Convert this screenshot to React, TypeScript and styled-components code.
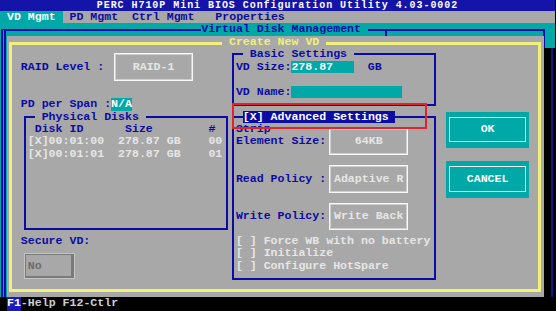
import React from 'react';
import styled, { createGlobalStyle, css } from 'styled-components';

const NAVY = '#0c0ca4';
const BLUE = '#1414a8';
const GRAY = '#a8a8a8';
const TEAL = '#00a8a8';
const YELLOW = '#f0f07a';
const WHITE = '#fcfcfc';
const LIGHT = '#e6e6e6';

// position on the 80x25 character grid (zero based, relative to the parent grid)
type Cell = { $c: number; $r: number; $w?: number; $h?: number };

const cell = css<Cell>`
  grid-column: ${(p) => p.$c + 1} / span ${(p) => p.$w ?? 1};
  grid-row: ${(p) => p.$r + 1} / span ${(p) => p.$h ?? 1};
`;

const GlobalStyle = createGlobalStyle`
  html, body { margin: 0; padding: 0; background: #000; }
  body { width: 556px; height: 311px; overflow: hidden; }
`;

const Screen = styled.main`
  position: relative;
  display: grid;
  grid-template-columns: repeat(80, 6.95px);
  grid-template-rows: 11px repeat(23, 12.44px) 1fr;
  width: 556px;
  height: 311px;
  background: #000;
  font-family: "Liberation Mono", "DejaVu Sans Mono", monospace;
  font-weight: 700;
  font-size: 11.58px;
  line-height: 12.44px;
  white-space: pre;
  overflow: hidden;
`;

// the title row is cut short in the screenshot, so its glyphs are a touch smaller
const TitleBar = styled.header`
  grid-column: 1 / -1;
  grid-row: 1;
  background: ${BLUE};
  color: ${WHITE};
  text-align: center;
  font-size: 10px;
  letter-spacing: 0.95px;
  line-height: 11px;
`;

const MenuBar = styled.nav`
  grid-column: 1 / -1;
  grid-row: 2;
  display: flex;
  background: ${GRAY};
`;

const MenuTab = styled.span<{ $active?: boolean; $gap: number }>`
  margin-left: ${(p) => p.$gap}ch;
  padding: 0 1ch;
  background: ${(p) => (p.$active ? TEAL : 'transparent')};
  color: ${(p) => (p.$active ? WHITE : NAVY)};
`;

const Backdrop = styled.section`
  grid-column: 1 / -1;
  grid-row: 3 / 25;
  display: flex;
  padding: 6px 10px 0 1px;
  background: ${TEAL};
`;

const OuterLines = styled.div`
  flex: 1;
  border-top: 2px solid ${NAVY};
  border-left: 5px double ${NAVY};
  border-right: 2px solid ${NAVY};
`;

const ScreenTitle = styled.span<Cell>`
  ${cell};
  background: ${TEAL};
  color: ${NAVY};
`;

const Tick = styled.span<Cell>`
  ${cell};
  margin: 7px 0 -2px 3px;
  border-left: 2px solid ${NAVY};
`;

const Dialog = styled.div`
  grid-column: 2 / 79;
  grid-row: 4 / 25;
  display: grid;
  grid-template-columns: subgrid;
  grid-template-rows: subgrid;
  background: ${GRAY};
  box-shadow: 3px 0 0 ${GRAY};
`;

const DialogFrame = styled.div`
  grid-column: 1 / -1;
  grid-row: 1 / -1;
  margin: 6px 0 5px 2px;
  border: 3px solid ${YELLOW};
`;

const DialogTitle = styled.span<Cell>`
  ${cell};
  background: ${GRAY};
  color: ${YELLOW};
`;

const Frame = styled.div<Cell>`
  ${cell};
  margin: 5px 1px 5px 3px;
  border: 2px solid ${NAVY};
`;

const FrameTitle = styled.span<Cell>`
  ${cell};
  background: ${GRAY};
  color: ${NAVY};
`;

const SelectedTitle = styled.span<Cell>`
  ${cell};
  background: ${NAVY};
  color: ${WHITE};
`;

const Label = styled.span<Cell>`
  ${cell};
  color: ${NAVY};
`;

const ListText = styled.span<Cell>`
  ${cell};
  color: ${LIGHT};
`;

const InputField = styled.span<Cell>`
  ${cell};
  background: ${TEAL};
  color: ${WHITE};
`;

const OptionBox = styled.div<Cell>`
  ${cell};
  display: flex;
  align-items: center;
  justify-content: center;
  margin: 5px 1px 5px 3px;
  border: 1px solid #f8f8f8;
  box-shadow: inset 0 0 0 1px #cfcfcf;
  color: ${LIGHT};
`;

const DisabledBox = styled.div<Cell>`
  ${cell};
  display: flex;
  align-items: center;
  margin: 6px 1px 6px 3px;
  padding-left: 3px;
  border: 1px solid #c4c4c4;
  box-shadow: inset 1px 1px 0 #7a7a7a, inset -3px -2px 0 #7a7a7a;
  color: #6c6c6c;
`;

const Button = styled.div<Cell>`
  ${cell};
  display: flex;
  margin: 1px -2px 0 2px;
  padding: 5px 3px 6px 3px;
  background: ${TEAL};
`;

const ButtonFace = styled.div`
  flex: 1;
  display: flex;
  align-items: center;
  justify-content: center;
  border: 1px solid #f0f0f0;
  color: ${WHITE};
`;

const Shadow = styled.div`
  grid-column: 79 / 81;
  grid-row: 5 / 25;
  margin-left: 3px;
  background: #000;
  border-right: 2px solid #000;
  box-shadow: inset -2px 0 0 #14148c;
`;

const StatusBar = styled.footer`
  grid-column: 1 / -1;
  grid-row: 25;
  display: flex;
  padding-left: 6.95px;
  background: #000;
  color: #cfcfcf;
`;

const HotKey = styled.span`
  background: #1a1ac0;
  color: ${WHITE};
`;

const Annotation = styled.div`
  position: absolute;
  left: 232px;
  top: 103px;
  width: 191px;
  height: 22px;
  border: 2px solid #e2222c;
`;

const menu = [
  { title: 'VD Mgmt', active: true, gap: 0 },
  { title: 'PD Mgmt', gap: 0 },
  { title: 'Ctrl Mgmt', gap: 0 },
  { title: 'Properties', gap: 1 },
];

const disks = [
  '[X]00:01:00  278.87 GB    00',
  '[X]00:01:01  278.87 GB    01',
];

const policies = [
  { label: 'Element Size:', value: '64KB', r: 7 },
  { label: 'Read Policy :', value: 'Adaptive R', r: 10 },
  { label: 'Write Policy:', value: 'Write Back', r: 13 },
];

const options = ['[ ] Force WB with no battery', '[ ] Initialize', '[ ] Configure HotSpare'];

const App = () => {
  return (
    <>
      <GlobalStyle />
      <Screen>
        <TitleBar>PERC H710P Mini BIOS Configuration Utility 4.03-0002</TitleBar>
        <MenuBar>
          {menu.map((item) => (
            <MenuTab key={item.title} $active={item.active} $gap={item.gap}>
              {item.title}
            </MenuTab>
          ))}
        </MenuBar>

        <Backdrop>
          <OuterLines />
        </Backdrop>
        <ScreenTitle $c={29} $r={2} $w={24}>Virtual Disk Management </ScreenTitle>
        <Tick $c={55} $r={2} />

        <Dialog>
          <DialogFrame />
          <DialogTitle $c={31} $r={0} $w={15}> Create New VD </DialogTitle>

          {/* left column */}
          <Label $c={2} $r={2} $w={12}>RAID Level :</Label>
          <OptionBox $c={15} $r={1} $w={12} $h={3}>RAID-1</OptionBox>

          <Label $c={2} $r={5} $w={13}>PD per Span :</Label>
          <InputField $c={15} $r={5} $w={3}>N/A</InputField>

          <Frame $c={2} $r={6} $w={30} $h={10} />
          <FrameTitle $c={4} $r={6} $w={16}> Physical Disks </FrameTitle>
          <Label $c={4} $r={7} $w={26}>Disk ID      Size        #</Label>
          {disks.map((d, i) => (
            <ListText key={d} $c={3} $r={8 + i} $w={28}>{d}</ListText>
          ))}

          <Label $c={2} $r={16} $w={10}>Secure VD:</Label>
          <DisabledBox $c={2} $r={17} $w={8} $h={3}>No</DisabledBox>

          {/* basic settings */}
          <Frame $c={32} $r={1} $w={30} $h={5} />
          <FrameTitle $c={34} $r={1} $w={16}> Basic Settings </FrameTitle>
          <Label $c={33} $r={2} $w={8}>VD Size:</Label>
          <InputField $c={41} $r={2} $w={9}>278.87</InputField>
          <Label $c={52} $r={2} $w={2}>GB</Label>
          <Label $c={33} $r={4} $w={8}>VD Name:</Label>
          <InputField $c={41} $r={4} $w={16} />

          {/* advanced settings */}
          <Frame $c={32} $r={6} $w={30} $h={14} />
          <SelectedTitle $c={34} $r={6} $w={22}>[X] Advanced Settings </SelectedTitle>
          <Label $c={33} $r={7} $w={5}>Strip</Label>
          {policies.map((p) => (
            <React.Fragment key={p.label}>
              <Label $c={33} $r={p.r + 1} $w={13}>{p.label}</Label>
              <OptionBox $c={46} $r={p.r} $w={12} $h={3}>{p.value}</OptionBox>
            </React.Fragment>
          ))}
          {options.map((o, i) => (
            <ListText key={o} $c={33} $r={16 + i} $w={28}>{o}</ListText>
          ))}

          <Button $c={63} $r={6} $w={12} $h={3}>
            <ButtonFace>OK</ButtonFace>
          </Button>
          <Button $c={63} $r={10} $w={12} $h={3}>
            <ButtonFace>CANCEL</ButtonFace>
          </Button>
        </Dialog>

        <Shadow />
        <StatusBar>
          <HotKey>F1</HotKey>-Help F12-Ctlr
        </StatusBar>
        <Annotation />
      </Screen>
    </>
  );
};

export default App;
